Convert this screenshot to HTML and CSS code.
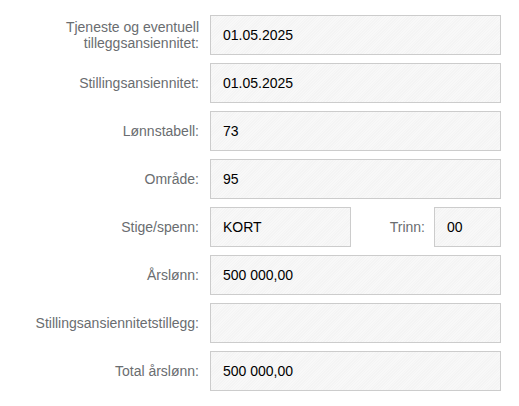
FILE: index.html
```html
<!DOCTYPE html>
<html lang="no">
<head>
<meta charset="utf-8">
<title>Lønnsopplysninger</title>
<link rel="stylesheet" href="styles.css">
</head>
<body>
<form class="form">
  <div class="row">
    <label class="label">Tjeneste og eventuell<br>tilleggsansiennitet:</label>
    <div class="field">01.05.2025</div>
  </div>
  <div class="row">
    <label class="label">Stillingsansiennitet:</label>
    <div class="field">01.05.2025</div>
  </div>
  <div class="row">
    <label class="label">Lønnstabell:</label>
    <div class="field">73</div>
  </div>
  <div class="row">
    <label class="label">Område:</label>
    <div class="field">95</div>
  </div>
  <div class="row">
    <label class="label">Stige/spenn:</label>
    <div class="split">
      <div class="field field-stige">KORT</div>
      <label class="label label-inline">Trinn:</label>
      <div class="field field-trinn">00</div>
    </div>
  </div>
  <div class="row">
    <label class="label">Årslønn:</label>
    <div class="field">500 000,00</div>
  </div>
  <div class="row">
    <label class="label">Stillingsansiennitetstillegg:</label>
    <div class="field"></div>
  </div>
  <div class="row">
    <label class="label">Total årslønn:</label>
    <div class="field">500 000,00</div>
  </div>
</form>
</body>
</html>
```
FILE: styles.css
```css
* {
  box-sizing: border-box;
}

html, body {
  margin: 0;
  background: #ffffff;
}

body {
  font-family: "Liberation Sans", Arial, sans-serif;
  font-size: 14px;
}

.form {
  display: flex;
  flex-direction: column;
  gap: 8px;
  padding-top: 15px;
}

.row {
  display: grid;
  grid-template-columns: 199px 291px;
  column-gap: 11px;
  align-items: center;
}

.label {
  color: #6a6d70;
  text-align: right;
  line-height: 16px;
}

/* read-only field: light grey with a fine hatched texture */
.field {
  height: 40px;
  border: 1px solid #cccccc;
  background-color: #f8f8f8;
  background-image: repeating-linear-gradient(135deg, rgba(0, 0, 0, 0.014) 0 1px, transparent 1px 2px);
  color: #000000;
  display: flex;
  align-items: center;
  padding-left: 12px;
}

.split {
  display: flex;
  align-items: center;
}

.field-stige {
  width: 141px;
}

.label-inline {
  margin-left: auto;
  margin-right: 9px;
}

.field-trinn {
  width: 67px;
}
```
